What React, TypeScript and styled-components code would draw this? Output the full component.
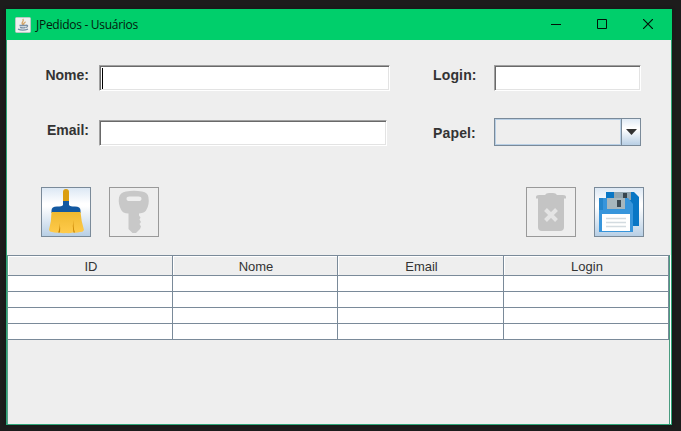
import React from "react";
import styled, { createGlobalStyle } from "styled-components";

const GlobalStyle = createGlobalStyle`
  * { box-sizing: border-box; }
  body { margin: 0; background: #1d1c1c; overflow: hidden; }
`;

const Desktop = styled.div`
  width: 681px;
  height: 431px;
  padding: 9px 9px 6px 6px;
  background: #1d1c1c;
  font-family: "Liberation Sans", Arial, sans-serif;
`;

const Window = styled.main`
  width: 666px;
  height: 416px;
  display: flex;
  flex-direction: column;
  border: 1px solid #2ea578;
  border-top: 0;
  background: #eeeeee;
  box-shadow: 0 0 3px #101b16;
`;

const TitleBar = styled.header`
  height: 31px;
  margin: 0 -1px;
  padding: 0 1px 0 9px;
  display: flex;
  flex: none;
  align-items: center;
  background: #00cf6b;
`;

const Title = styled.h1`
  flex: 1;
  margin: 0 0 0 5px;
  color: #041a0d;
  font: 400 12px/18px "Open Sans", "Noto Sans", sans-serif;
  letter-spacing: -0.28px;
`;

const WindowButton = styled.button`
  width: 46px;
  height: 31px;
  padding: 0 0 1px;
  display: flex;
  align-items: center;
  justify-content: center;
  border: 0;
  background: transparent;
`;

const Content = styled.section`
  flex: none;
  height: 215px;
  padding-top: 25px;
`;

const FormRow = styled.div<{ $height: number; $gap: number }>`
  height: ${(p) => p.$height}px;
  margin-bottom: ${(p) => p.$gap}px;
  display: grid;
  grid-template-columns: 92px 334px 61px 147px;
  align-items: end;
`;

const Label = styled.label<{ $right?: boolean; $rise?: number }>`
  padding: 0 ${(p) => (p.$right ? 10 : 0)}px ${(p) => p.$rise ?? 8}px 0;
  text-align: ${(p) => (p.$right ? "right" : "left")};
  font-size: 14px;
  line-height: 16px;
  font-weight: 700;
  letter-spacing: ${(p) => (p.$right ? 0 : 0.15)}px;
  color: #333333;
`;

const TextField = styled.div<{ $width: number }>`
  width: ${(p) => p.$width}px;
  height: 26px;
  padding: 1px;
  border: 1px solid;
  border-color: #a0a0a0 #fff #fff #a0a0a0;
  background: #fff;
  box-shadow: inset 1px 1px #696969, inset -1px -1px #e3e3e3;
`;

const Caret = styled.span`
  display: block;
  width: 1px;
  height: 21px;
  margin: 1px 0 0 1px;
  background: #000;
`;

const Combo = styled.div`
  width: 147px;
  height: 28px;
  display: flex;
  border: 1px solid #7a8a99;
  background: #eee;
`;

const ComboValue = styled.div`
  flex: 1;
  border: 1px solid #b8cfe5;
`;

const ComboArrow = styled.div`
  width: 19px;
  display: flex;
  align-items: center;
  justify-content: center;
  border-left: 1px solid #7a8a99;
  background: linear-gradient(#dfeaf5, #fff 35%, #fff 40%, #b8cfe5);
`;

const Toolbar = styled.div`
  display: flex;
  gap: 18px;
  padding: 0 27px 0 34px;
`;

const ToolButton = styled.button`
  width: 50px;
  height: 50px;
  padding: 0;
  display: flex;
  border: 1px solid #7a8a99;
  background: linear-gradient(#dce8f4, #fff 32%, #fff 38%, #b8cfe5);
  &:disabled {
    border-color: #999;
    background: #eee;
  }
`;

const Spacer = styled.div`
  flex: 1;
`;

const TablePane = styled.section`
  flex: 1;
  margin-right: 1px;
  border-top: 1px solid #7a8a99;
  border-right: 1px solid #4a9c80;
  border-left: 1px solid #5b9c88;
  box-shadow: 1px 0 #fff;
`;

const Table = styled.table`
  width: 661px;
  border-collapse: separate;
  border-spacing: 0;
  table-layout: fixed;
`;

const Column = styled.col<{ $width: number }>`
  width: ${(p) => p.$width}px;
`;

const HeadCell = styled.th`
  height: 20px;
  padding: 2px 0 0 2px;
  border-right: 1px solid #7a8a99;
  border-bottom: 1px solid #7a8a99;
  box-shadow: inset 1px 1px #fff;
  background: #eee;
  color: #333;
  font-size: 13px;
  line-height: 16px;
  font-weight: 400;
`;

const Cell = styled.td`
  height: 16px;
  padding: 0;
  border-right: 1px solid #7a8a99;
  border-bottom: 1px solid #7a8a99;
  background: #fff;
`;

const JavaIcon = () => (
  <svg width="16" height="16" viewBox="0 0 16 16">
    <rect x=".5" y=".5" width="15" height="15" rx="1" fill="#edf0ef" stroke="#b8c9c3" />
    <path d="M8 8C5 5.5 10 4.7 7.8 2M9 8c-1.6-1.8 1.4-2 1.3-3.4" fill="none" stroke="#d4a467" strokeWidth="1.3" />
    <path d="M4.5 8.5h6M5 10.3c2 .8 4 .6 5.6 0M3 12.2c3 1.3 7 1.1 10 0M10.5 8.3c3-.5 2.4 1.8.5 2" fill="none" stroke="#7890a7" strokeWidth="1.3" />
  </svg>
);

const BroomIcon = () => (
  <svg width="48" height="48" viewBox="0 0 48 48">
    <defs>
      <linearGradient id="bristle" x2="0" y2="1">
        <stop stopColor="#efb92f" />
        <stop offset="1" stopColor="#ffcb4c" />
      </linearGradient>
    </defs>
    <path d="M21 14V4q0-3 3-3t3 3v10z" fill="#db9e10" />
    <path d="M21 13h6v4q1 1.500 6 1.500 5.500 0 5.500 4V25H9.500v-2.500q0-4 5.500-4 5 0 6-1.500z" fill="#1258a0" />
    <path d="M9.500 24h29q.5 8 3.500 18-1 2.500-4 2-3 1-7 .5-3.500 1-7 .5-3.500.5-7-.5-3.500.5-7-.5-2.500 0-3-2 2.500-9 2.500-18z" fill="url(#bristle)" />
    <path d="M17.500 35q.5 6-1.500 9.500h2q.5-5-.5-9.500zm14-3q-.5 8 1.500 12.500h-1.500q-1.500-6 0-12.500z" fill="#c88400" />
  </svg>
);

const KeyIcon = () => (
  <svg width="48" height="48" viewBox="0 0 48 48">
    <path
      fillRule="evenodd"
      fill="#c8c8c8"
      d="M16 3.500Q24 2 32 3.500q6 1 6.500 6 1 7-2 12-1 3.500-7.500 4v2l1.500 2-1 2 1.500 2.500-1.500 2 1.500 2.500-1 2.500-4 4h-3.500l-4-4V25.500q-6 0-7.500-4-3-6-2-12 1-5 7-6zM19.500 8.500q-3 0-3 2.300t3 2.300h9q3 0 3-2.300t-3-2.300z"
    />
  </svg>
);

const TrashIcon = () => (
  <svg width="48" height="48" viewBox="0 0 48 48">
    <path d="M9 9q0-2 3-2h6q1-2 4-2h4q3 0 4 2h6q3 0 3 2v1.500H9z" fill="#c4c4c4" />
    <path d="M11 10h26v29q0 4-4 4H15q-4 0-4-4z" fill="#c4c4c4" />
    <path d="M18.500 21.500l11 11m0-11l-11 11" stroke="#e4e4e4" strokeWidth="4" />
  </svg>
);

const SaveIcon = () => (
  <svg width="48" height="48" viewBox="0 0 48 48">
    <path d="M11 4h28l5 5v29H11z" fill="#0876c5" />
    <path d="M19 4h17v8H19z" fill="#91a5b0" />
    <path d="M28 5h4v5h-4z" fill="#38454e" />
    <path d="M4 10h29l5 6v28H4z" fill="#3795db" />
    <path d="M4 10h4v12H4z" fill="#2385cb" />
    <path d="M12 10h18v11H12z" fill="#a7b7be" />
    <path d="M22 12h4v7h-4z" fill="#3d4a52" />
    <path d="M7 26h28v17H7z" fill="#fff" />
    <path d="M11 30.500h20M11 34.500h20M11 38.500h20" stroke="#d3dbe0" strokeWidth="1.500" />
  </svg>
);

const columns = [
  { name: "ID", width: 165 },
  { name: "Nome", width: 165 },
  { name: "Email", width: 166 },
  { name: "Login", width: 165 },
];

export default function App() {
  return (
    <Desktop>
      <GlobalStyle />
      <Window>
        <TitleBar>
          <JavaIcon />
          <Title>JPedidos - Usuários</Title>
          <WindowButton aria-label="Minimizar">
            <svg width="10" height="10"><path d="M0 5.500h10" stroke="#021208" /></svg>
          </WindowButton>
          <WindowButton aria-label="Maximizar">
            <svg width="10" height="10"><path d="M.5.5h9v9h-9z" fill="none" stroke="#021208" /></svg>
          </WindowButton>
          <WindowButton aria-label="Fechar">
            <svg width="10" height="10"><path d="M0 0l10 10M10 0L0 10" stroke="#021208" strokeWidth="1.200" /></svg>
          </WindowButton>
        </TitleBar>
        <Content>
          <FormRow $height={26} $gap={27}>
            <Label $right>Nome:</Label>
            <TextField $width={291}><Caret /></TextField>
            <Label>Login:</Label>
            <TextField $width={147} />
          </FormRow>
          <FormRow $height={28} $gap={41}>
            <Label $right>Email:</Label>
            <TextField $width={288} />
            <Label $rise={5}>Papel:</Label>
            <Combo>
              <ComboValue />
              <ComboArrow>
                <svg width="11" height="6"><path d="M0 0h11L5.500 6z" fill="#333" /></svg>
              </ComboArrow>
            </Combo>
          </FormRow>
          <Toolbar>
            <ToolButton aria-label="Limpar"><BroomIcon /></ToolButton>
            <ToolButton aria-label="Senha" disabled><KeyIcon /></ToolButton>
            <Spacer />
            <ToolButton aria-label="Excluir" disabled><TrashIcon /></ToolButton>
            <ToolButton aria-label="Salvar"><SaveIcon /></ToolButton>
          </Toolbar>
        </Content>
        <TablePane>
          <Table>
            <colgroup>
              {columns.map((c) => <Column key={c.name} $width={c.width} />)}
            </colgroup>
            <thead>
              <tr>{columns.map((c) => <HeadCell key={c.name}>{c.name}</HeadCell>)}</tr>
            </thead>
            <tbody>
              {[0, 1, 2, 3].map((r) => (
                <tr key={r}>{columns.map((c) => <Cell key={c.name} />)}</tr>
              ))}
            </tbody>
          </Table>
        </TablePane>
      </Window>
    </Desktop>
  );
}
